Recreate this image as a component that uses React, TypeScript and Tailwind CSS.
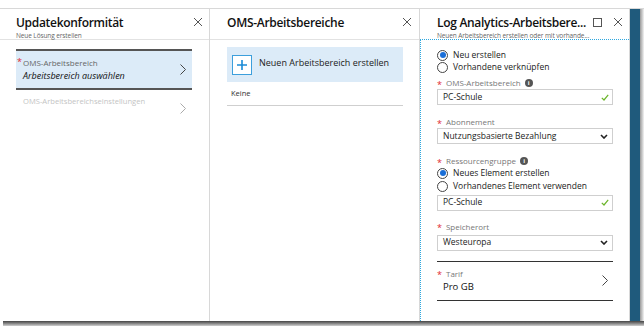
import React from 'react';

const font = { fontFamily: '"Open Sans", "Noto Sans", sans-serif' };

const CloseIcon = () => (
  <svg width="10" height="10" viewBox="0 0 10 10" className="shrink-0">
    <path d="M1 1 L9 9 M9 1 L1 9" stroke="#555" strokeWidth="1" fill="none" />
  </svg>
);

const Chevron = ({ color = '#444' }: { color?: string }) => (
  <svg width="6" height="11" viewBox="0 0 6 11" className="shrink-0">
    <path d="M0.5 0.5 L5.5 5.5 L0.5 10.5" stroke={color} strokeWidth="1" fill="none" />
  </svg>
);

const DownChevron = () => (
  <svg width="8" height="5" viewBox="0 0 8 5" className="shrink-0">
    <path d="M1 1 L4 4 L7 1" stroke="#222" strokeWidth="1.6" fill="none" />
  </svg>
);

const Check = () => (
  <svg width="8" height="7" viewBox="0 0 8 7" className="shrink-0">
    <path d="M0.8 3.8 L3 6 L7.2 0.8" stroke="#6bb52a" strokeWidth="1.2" fill="none" />
  </svg>
);

const Info = () => (
  <span className="w-[8px] h-[8px] rounded-full bg-[#555] text-white text-[6px] leading-[8px] font-bold flex items-center justify-center ml-[4px]">
    i
  </span>
);

const Radio = ({ checked, label }: { checked?: boolean; label: string }) => (
  <div className="flex items-center gap-[5px] h-[12.5px]">
    <span className="w-[11px] h-[11px] rounded-full border border-[#444] bg-white flex items-center justify-center">
      {checked && <span className="w-[6px] h-[6px] rounded-full bg-[#1a6fd8]" />}
    </span>
    <span className="text-[8.5px] text-[#222] whitespace-nowrap">{label}</span>
  </div>
);

const FieldLabel = ({ text, info }: { text: string; info?: boolean }) => (
  <div className="flex items-center text-[8px] text-[#777] h-[12px] whitespace-nowrap">
    <span className="text-[#e0282e] mr-[4px] text-[9px] leading-none mt-[2px]">*</span>
    {text}
    {info && <Info />}
  </div>
);

const TextInput = ({ value }: { value: string }) => (
  <div className="h-[16px] border border-[#cfcfcf] flex items-center justify-between pl-[5px] pr-[3px] text-[8.5px] text-[#222]">
    {value}
    <Check />
  </div>
);

const SelectBox = ({ value }: { value: string }) => (
  <div className="h-[16px] border border-[#cfcfcf] flex items-center justify-between pl-[5px] pr-[4px] text-[8.5px] text-[#222]">
    {value}
    <DownChevron />
  </div>
);

const Header = ({ title, subtitle, extra }: { title: string; subtitle?: string; extra?: boolean }) => (
  <div className="h-[30px] flex items-start justify-between pt-[6px]">
    <div className="flex flex-col min-w-0">
      <span className="text-[12px] font-semibold text-[#111] leading-[15px] tracking-[-0.3px] whitespace-nowrap">{title}</span>
      {subtitle && (
        <span className="text-[6.5px] text-[#666] leading-[9px] mt-[1px] whitespace-nowrap tracking-[-0.1px]">{subtitle}</span>
      )}
    </div>
    <div className="flex items-center gap-[11px] mt-[2px] shrink-0">
      {extra && <span className="w-[9px] h-[9px] border border-[#555]" />}
      <CloseIcon />
    </div>
  </div>
);

export default function App() {
  return (
    <div className="w-[644px] h-[326px] bg-white flex flex-col overflow-hidden" style={font}>
      <div className="h-[9px] border-b border-[#d8d8d8]" />
      <div className="flex flex-1">
        {/* Updatekonformität */}
        <div className="w-[210px] border-r border-[#d8d8d8] flex flex-col">
          <div className="pl-[16px] pr-[6px] border-b border-[#e2e2e2]">
            <Header title="Updatekonformität" subtitle="Neue Lösung erstellen" />
          </div>
          <div className="px-[16px] pr-[17px] pt-[9px]">
            <div className="h-[41px] bg-[#dcebf8] border-t-2 border-b-2 border-[#555] flex items-center justify-between pl-[1px] pr-[6px]">
              <div className="flex">
                <span className="text-[#e0282e] text-[9px] leading-none w-[6px]">*</span>
                <div className="flex flex-col">
                  <span className="text-[8px] text-[#666] leading-[12px]">OMS-Arbeitsbereich</span>
                  <span className="text-[9px] italic text-[#111] leading-[13px]">Arbeitsbereich auswählen</span>
                </div>
              </div>
              <Chevron />
            </div>
            <div className="h-[34px] flex items-start justify-between pl-[7px] pr-[6px] pt-[5px]">
              <span className="text-[7.6px] text-[#c4c4c4] leading-[12px]">OMS-Arbeitsbereichseinstellungen</span>
              <div className="mt-[8px]">
                <Chevron color="#aaa" />
              </div>
            </div>
          </div>
        </div>

        {/* OMS-Arbeitsbereiche */}
        <div className="w-[210px] border-r border-[#d8d8d8] flex flex-col">
          <div className="pl-[17px] pr-[7px] border-b border-[#e2e2e2]">
            <Header title="OMS-Arbeitsbereiche" />
          </div>
          <div className="pl-[17px] pr-[16px] pt-[7px]">
            <div className="h-[35px] bg-[#dcebf8] flex items-center pl-[5px] gap-[7px]">
              <span className="w-[20px] h-[20px] border border-[#3c9fdc] bg-white flex items-center justify-center">
                <svg width="12" height="12" viewBox="0 0 12 12">
                  <path d="M6 1 V11 M1 6 H11" stroke="#1a8ad6" strokeWidth="1.6" />
                </svg>
              </span>
              <span className="text-[9px] text-[#222] -mt-[4px]">Neuen Arbeitsbereich erstellen</span>
            </div>
            <div className="h-[24px] border-b border-[#cfcfcf] flex items-center pl-[4px] text-[7.5px] text-[#333]">
              Keine
            </div>
          </div>
        </div>

        {/* Log Analytics */}
        <div className="w-[210px] border-r border-[#d8d8d8] flex flex-col">
          <div className="pl-[17px] pr-[6px]">
            <Header title="Log Analytics-Arbeitsbere..." subtitle="Neuen Arbeitsbereich erstellen oder mit vorhande..." extra />
          </div>
          <div className="flex-1 border-t border-l border-dotted border-[#2ea8e0] pl-[16px] pr-[16px] pt-[9px]">
            <Radio checked label="Neu erstellen" />
            <Radio label="Vorhandene verknüpfen" />
            <div className="mt-[3px]">
              <FieldLabel text="OMS-Arbeitsbereich" info />
            </div>
            <TextInput value="PC-Schule" />
            <div className="mt-[11px]">
              <FieldLabel text="Abonnement" />
            </div>
            <SelectBox value="Nutzungsbasierte Bezahlung" />
            <div className="mt-[11px]">
              <FieldLabel text="Ressourcengruppe" info />
            </div>
            <Radio checked label="Neues Element erstellen" />
            <div className="mt-[0.5px]">
              <Radio label="Vorhandenes Element verwenden" />
            </div>
            <div className="mt-[2px]">
              <TextInput value="PC-Schule" />
            </div>
            <div className="mt-[10px]">
              <FieldLabel text="Speicherort" />
            </div>
            <div className="mt-[2px]">
              <SelectBox value="Westeuropa" />
            </div>
            <div className="mt-[10px] h-[40px] border-t border-b border-[#333] flex items-center justify-between pr-[5px]">
              <div className="flex flex-col">
                <FieldLabel text="Tarif" />
                <span className="text-[9.5px] text-[#111] pl-[6px] leading-[14px]">Pro GB</span>
              </div>
              <Chevron />
            </div>
          </div>
        </div>

        <div className="w-[10px] bg-[#1f5a7c]" />
        <div className="w-[4px] bg-gradient-to-r from-[#9a9a9a] to-[#f4f4f4]" />
      </div>
      <div className="h-[5px] ml-[3px] bg-gradient-to-b from-[#444] to-[#d0d0d0]" />
    </div>
  );
}
